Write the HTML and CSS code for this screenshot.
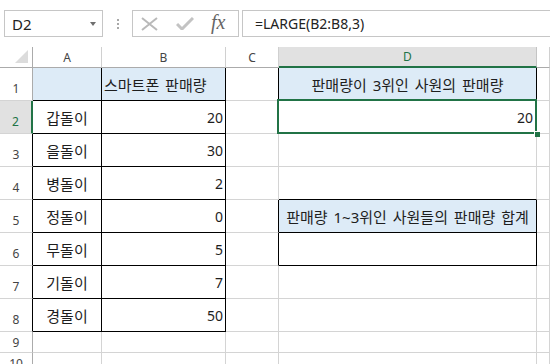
FILE: index.html
```html
<!DOCTYPE html>
<html lang="ko">
<head>
    <meta charset="UTF-8">
    <title>LARGE 함수</title>
    <link rel="stylesheet" href="styles.css">
</head>
<body>
    <div class="topbar">
        <div class="namebox">
            <span>D2</span>
            <span class="arrow"></span>
        </div>
        <div class="dots"><i></i><i></i><i></i></div>
        <div class="fxbox">
            <svg width="17" height="14" viewBox="0 0 17 14"><path d="M1 1 L16 13 M16 1 L1 13" stroke="#b9b9b9" stroke-width="2" fill="none"/></svg>
            <svg width="18" height="13" viewBox="0 0 18 13"><path d="M1 7 L6 12 L17 1" stroke="#c3c3c3" stroke-width="3" fill="none"/></svg>
            <span class="fx">fx</span>
        </div>
        <div class="formula">=LARGE(B2:B8,3)</div>
    </div>

    <div class="sheet">
        <!-- column headers -->
        <div class="c corner"><span class="tri"></span></div>
        <div class="c hd">A</div>
        <div class="c hd">B</div>
        <div class="c hd">C</div>
        <div class="c hd active">D</div>
        <div class="c hd"></div>

        <!-- 1 -->
        <div class="c rh">1</div>
        <div class="c blue bk-r bk-b"></div>
        <div class="c blue bk-r bk-b left">스마트폰 판매량</div>
        <div class="c bk-r"></div>
        <div class="c blue bk-r ctr">판매량이 3위인 사원의 판매량</div>
        <div class="c"></div>

        <!-- 2 -->
        <div class="c rh active">2</div>
        <div class="c bk-r bk-b ctr">갑돌이</div>
        <div class="c bk-r bk-b num">20</div>
        <div class="c"></div>
        <div class="c num sel">20</div>
        <div class="c"></div>

        <!-- 3 -->
        <div class="c rh bk-r">3</div>
        <div class="c bk-r bk-b ctr">을돌이</div>
        <div class="c bk-r bk-b num">30</div>
        <div class="c"></div>
        <div class="c"></div>
        <div class="c"></div>

        <!-- 4 -->
        <div class="c rh bk-r">4</div>
        <div class="c bk-r bk-b ctr">병돌이</div>
        <div class="c bk-r bk-b num">2</div>
        <div class="c"></div>
        <div class="c bk-b"></div>
        <div class="c"></div>

        <!-- 5 -->
        <div class="c rh bk-r">5</div>
        <div class="c bk-r bk-b ctr">정돌이</div>
        <div class="c bk-r bk-b num">0</div>
        <div class="c bk-r"></div>
        <div class="c blue bk-r bk-b ctr">판매량 1~3위인 사원들의 판매량 합계</div>
        <div class="c"></div>

        <!-- 6 -->
        <div class="c rh bk-r">6</div>
        <div class="c bk-r bk-b ctr">무돌이</div>
        <div class="c bk-r bk-b num">5</div>
        <div class="c bk-r"></div>
        <div class="c bk-r bk-b"></div>
        <div class="c"></div>

        <!-- 7 -->
        <div class="c rh bk-r">7</div>
        <div class="c bk-r bk-b ctr">기돌이</div>
        <div class="c bk-r bk-b num">7</div>
        <div class="c"></div>
        <div class="c"></div>
        <div class="c"></div>

        <!-- 8 -->
        <div class="c rh bk-r">8</div>
        <div class="c bk-r bk-b ctr">경돌이</div>
        <div class="c bk-r bk-b num">50</div>
        <div class="c"></div>
        <div class="c"></div>
        <div class="c"></div>

        <!-- 9 -->
        <div class="c rh short">9</div>
        <div class="c"></div>
        <div class="c"></div>
        <div class="c"></div>
        <div class="c"></div>
        <div class="c"></div>

        <!-- 10 -->
        <div class="c rh short last">10</div>
        <div class="c"></div>
        <div class="c"></div>
        <div class="c"></div>
        <div class="c"></div>
        <div class="c"></div>
    </div>
</body>
</html>
```

FILE: styles.css
```css
body {
    margin: 0;
    font-family: "Noto Sans", "Noto Sans CJK KR", sans-serif;
    background-color: white;
    color: #1e1e1e;
    overflow: hidden;
    width: 550px;
    height: 364px;
}
.topbar {
    height: 47px;
    box-sizing: border-box;
    padding-top: 10px;
    display: flex;
    align-items: flex-start;
}
.namebox {
    margin-left: 4px;
    width: 99px;
    height: 27px;
    box-sizing: border-box;
    border: 1px solid #c6c6c6;
    display: flex;
    align-items: center;
    justify-content: space-between;
    padding: 0 6px 0 7px;
    font-size: 15px;
    color: #222;
}
.namebox .arrow {
    width: 0;
    height: 0;
    border-left: 3.5px solid transparent;
    border-right: 3.5px solid transparent;
    border-top: 4px solid #6e6e6e;
}
.dots {
    width: 29px;
    height: 27px;
    display: flex;
    flex-direction: column;
    align-items: center;
    justify-content: center;
    gap: 2px;
}
.dots i {
    width: 2px;
    height: 2px;
    background: #a8a8a8;
}
.fxbox {
    width: 107px;
    height: 27px;
    box-sizing: border-box;
    border: 1px solid #c6c6c6;
    display: flex;
    align-items: center;
    padding-left: 8px;
    gap: 18px;
}
.fxbox svg {
    display: block;
}
.fx {
    font-family: "Liberation Serif", serif;
    font-style: italic;
    font-size: 20px;
    color: #666;
    margin-left: -1px;
    margin-top: -2px;
}
.formula {
    margin-left: 3px;
    flex: 1;
    height: 27px;
    box-sizing: border-box;
    border: 1px solid #c6c6c6;
    border-right: none;
    display: flex;
    align-items: center;
    padding-left: 12px;
    font-size: 14px;
    color: #222;
}
.sheet {
    display: grid;
    grid-template-columns: 33px 69px 124px 53px 258px 1fr;
    grid-template-rows: 21px repeat(8, 33px) 21px 21px;
}
.c {
    box-sizing: border-box;
    border-right: 1px solid #d4d4d4;
    border-bottom: 1px solid #d4d4d4;
    display: flex;
    align-items: center;
    font-size: 15px;
    word-spacing: 2px;
    white-space: nowrap;
    position: relative;
    padding-top: 1px;
}
.hd {
    justify-content: center;
    font-size: 12px;
    color: #444;
    border-right-color: #d0d0d0;
    border-bottom-color: #ababab;
    padding-top: 0;
}
.hd.active {
    background: #e1e1e1;
    color: #217346;
    border-bottom: 2px solid #217346;
    border-right-color: #c4c4c4;
}
.corner {
    border-bottom-color: #ababab;
    border-right-color: #ababab;
}
.corner .tri {
    position: absolute;
    right: 4px;
    bottom: 4px;
    width: 0;
    height: 0;
    border-left: 13px solid transparent;
    border-bottom: 13px solid #dcdcdc;
}
.rh {
    justify-content: center;
    align-items: flex-end;
    padding-bottom: 3px;
    font-size: 12px;
    color: #444;
    border-right-color: #ababab;
}
.rh.short {
    align-items: center;
    padding-bottom: 0;
}
.rh.last {
    align-items: flex-start;
    padding-top: 2px;
}
.rh.active {
    background: #e1e1e1;
    color: #217346;
    border-right: 2px solid #217346;
}
.blue {
    background-color: #ddebf7;
}
.bk-r {
    border-right-color: #000;
}
.bk-b {
    border-bottom-color: #000;
}
.ctr {
    justify-content: center;
}
.left {
    padding-left: 2px;
}
.num {
    justify-content: flex-end;
    padding-right: 2px;
    font-size: 14px;
}
.sel {
    padding-right: 3px;
}
.sel::before {
    content: "";
    position: absolute;
    left: -2px;
    top: -2px;
    right: -1px;
    bottom: -1px;
    border: 2px solid #217346;
    z-index: 2;
}
.sel::after {
    content: "";
    position: absolute;
    right: -4px;
    bottom: -4px;
    width: 5px;
    height: 5px;
    background: #217346;
    border-left: 1px solid #fff;
    border-top: 1px solid #fff;
    z-index: 3;
}
```
